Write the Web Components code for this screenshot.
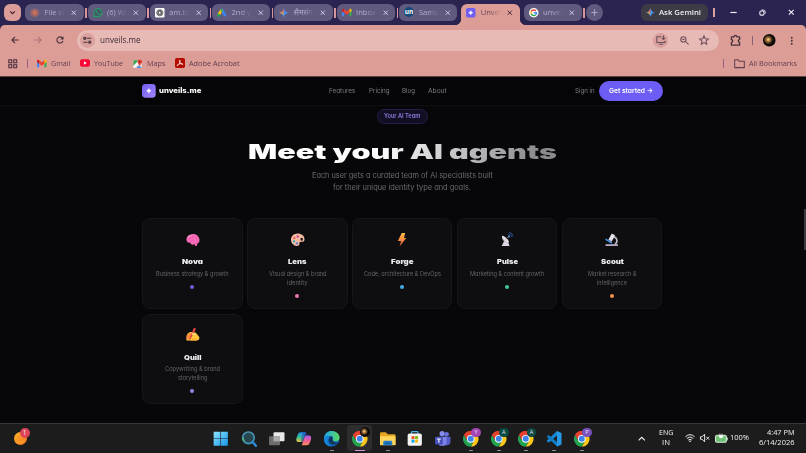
<!DOCTYPE html>
<html lang="en">
<head>
<meta charset="utf-8">
<title>Unveils</title>
<style>
  html, body { margin: 0; height: 100%; overflow: hidden; background: #070709; }
</style>
</head>
<body>
<desktop-screen></desktop-screen>

<script>
// ---------- icons ----------
const CHROME = `
  <path d="M12 12 1.6 6A12 12 0 0 1 22.4 6H12z" fill="#e5412f"/>
  <path d="M12 12 22.4 6A12 12 0 0 1 12 24l5.2-9z" fill="#fcc61d"/>
  <path d="M12 12 17.2 15 12 24A12 12 0 0 1 1.6 6l5.2 9z" fill="#23a350"/>
  <path d="M12 6h10.400A12 12 0 0 0 1.600 6l5.200 9z" fill="#e5412f"/>
  <circle cx="12" cy="12" r="6" fill="#fff"/><circle cx="12" cy="12" r="4.600" fill="#3c83ee"/>`;

const SPARK = `
  <defs><linearGradient id="s" x1="0" y1="0" x2="1" y2="1"><stop offset="0" stop-color="#ea4f47"/><stop offset=".35" stop-color="#58a45c"/><stop offset=".6" stop-color="#3f8df6"/><stop offset="1" stop-color="#4a86f5"/></linearGradient></defs>
  <path d="M12 0C14 7.500 16.500 10 24 12 16.500 14 14 16.500 12 24 10 16.500 7.500 14 0 12 7.500 10 10 7.500 12 0z" fill="#478ff3"/>
  <path d="M0 12C7.500 10 10 7.500 12 0L12 12z" fill="#e96a4a"/>
  <path d="M0 12C7.500 14 9 15 10.500 18.500L12 12z" fill="#e3b23c"/>`;

const MAIL = `
  <path d="M0 5v16h5.500V11z" fill="#4285f4"/><path d="M24 5v16h-5.500V11z" fill="#34a853"/>
  <path d="M0 5c0-3 3-4 5.500-2v9L0 8z" fill="#c5221f"/><path d="M24 5c0-3-3-4-5.500-2v9L24 8z" fill="#fbbc04"/>
  <path d="M5.500 3 12 8l6.500-5v9L12 17l-6.500-5z" fill="#ea4335"/>`;

const ICONS = {
  chrome: CHROME,
  spark: SPARK,
  mail: MAIL,
  down: `<path d="M4 8l8 8 8-8" fill="none" stroke="currentColor" stroke-width="4"/>`,
  up: `<path d="M2 17.500l10-10 10 10" fill="none" stroke="currentColor" stroke-width="3.600"/>`,
  close: `<path d="M3 3l18 18M21 3L3 21" fill="none" stroke="currentColor" stroke-width="4"/>`,
  plus: `<path d="M12 1v22M1 12h22" fill="none" stroke="currentColor" stroke-width="3.600"/>`,
  minus: `<path d="M1 12h22" stroke="currentColor" stroke-width="4"/>`,
  restore: `<rect x="3" y="7" width="14" height="14" rx="4" fill="none" stroke="currentColor" stroke-width="3.600"/><path d="M8 3.500h7q6 0 6 6V16" fill="none" stroke="currentColor" stroke-width="3.200"/>`,
  back: `<path d="M23 12H3M12 2.500 2.500 12l9.500 9.500" fill="none" stroke="currentColor" stroke-width="3.400"/>`,
  forward: `<path d="M1 12h20M12 2.500l9.500 9.500-9.500 9.500" fill="none" stroke="currentColor" stroke-width="3.200"/>`,
  reload: `<path d="M21 14.500A9.300 9.300 0 1 1 19 5.500l2 2.500" fill="none" stroke="currentColor" stroke-width="3.400"/><path d="M22.500 1v9.500H13z" fill="currentColor"/>`,
  tune: `<g fill="none" stroke="currentColor" stroke-width="3.200"><circle cx="5" cy="6.500" r="3"/><path d="M11 6.500h12M1 17.500h12"/><circle cx="19" cy="17.500" r="3"/></g>`,
  install: `<path d="M13 4H2v14h20v-4M7 22h10M18 1v9M14 7l4 4 4-4" fill="none" stroke="currentColor" stroke-width="2.600"/>`,
  zoomout: `<circle cx="9" cy="9" r="7" fill="none" stroke="currentColor" stroke-width="2.800"/><path d="M14 14l9 9M6 9h6" stroke="currentColor" stroke-width="2.800"/>`,
  star: `<path d="M12 2l3 7 7.500.600-5.700 5 1.700 7.400L12 18l-6.500 4 1.700-7.400-5.700-5L9 9z" fill="none" stroke="currentColor" stroke-width="2.500"/>`,
  puzzle: `<path d="M3 4h6q0-3 3-3t3 3h6v6q-3 0-3 3t3 3v6H3v-6q3 0 3-3t-3-3z" fill="none" stroke="currentColor" stroke-width="2.800" stroke-linejoin="round"/>`,
  dots: `<g fill="currentColor"><circle cx="12" cy="2.500" r="3"/><circle cx="12" cy="12" r="3"/><circle cx="12" cy="21.500" r="3"/></g>`,
  avatar: `<defs><radialGradient id="a" cx=".42" cy=".45" r=".38"><stop offset="0" stop-color="#fff1bd"/><stop offset=".3" stop-color="#c38a45"/><stop offset="1" stop-color="#0b0806"/></radialGradient></defs><circle cx="12" cy="12" r="12" fill="url(#a)"/>`,
  grid: `<g fill="none" stroke="currentColor" stroke-width="2.800"><rect x="2" y="2" width="7.500" height="7.500"/><rect x="14.500" y="2" width="7.500" height="7.500"/><rect x="2" y="14.500" width="7.500" height="7.500"/><rect x="14.500" y="14.500" width="7.500" height="7.500"/></g>`,
  folder: `<path d="M1.500 4h7.500l2.500 3h11v14h-21z" fill="none" stroke="currentColor" stroke-width="2.200" stroke-linejoin="round"/>`,
  youtube: `<rect x="0" y="3" width="24" height="18" rx="5" fill="#fa0535"/><path d="M9.500 8v8l7-4z" fill="#fff"/>`,
  maps: `<rect x="1" y="3" width="21" height="20" rx="3" fill="#f0eee9"/><path d="M1 6q0-3 3-3h10L1 17z" fill="#35a554"/><path d="M4 23 15 12l7 8q0 3-3 3z" fill="#c8d0d8"/><path d="M1 19 12 8l3 3L4 23q-3 0-3-4z" fill="#fff"/><path d="M9 23l6-6 7 6z" fill="#4285f4"/><path d="M17 1a6 6 0 0 0-6 6c0 4 4 5 6 11 2-6 6-7 6-11a6 6 0 0 0-6-6z" fill="#e8453a"/><circle cx="17" cy="7" r="2.200" fill="#8c1d18"/>`,
  acrobat: `<rect width="24" height="24" rx="4" fill="#b30b00"/><path d="M11.500 5c2 0 1 5-1 8.500S6 19 5 18s3-3.500 7-4.300 7.500-.200 7 1.300-4.500 0-6.500-3-3-7-1-7z" fill="none" stroke="#fff" stroke-width="1.700"/>`,
  claude: `<path d="M12 1v22M1 12h22M4 4l16 16M20 4 4 20M8 2l8 20M16 2 8 22M2 8l20 8M22 8 2 16" stroke="#dc7452" stroke-width="1.700"/>`,
  whatsapp: `<path d="M2 22l1.500-5.500A10 10 0 1 1 7.500 20.500z" fill="#435568" stroke="#229f62" stroke-width="2.800"/><path d="M8.500 6.500q-2 2 0 5 3 5 7 6 3-1 2-3l-3-1.200-1.300 1.200q-2.500-1-3.400-3.500l1-1.500-1-3z" fill="#2aae68"/>`,
  chatgpt: `<rect width="24" height="24" rx="3" fill="#fff"/><g fill="none" stroke="#3c3c3c" stroke-width="1.500"><circle cx="12" cy="12" r="8"/><ellipse cx="12" cy="12" rx="7" ry="3.500"/><ellipse cx="12" cy="12" rx="7" ry="3.500" transform="rotate(60 12 12)"/><ellipse cx="12" cy="12" rx="7" ry="3.500" transform="rotate(120 12 12)"/></g>`,
  ads: `<path d="M12.500 5 20 18" stroke="#3d84f3" stroke-width="7" stroke-linecap="round"/><path d="M11 6 5 16" stroke="#fbc012" stroke-width="7" stroke-linecap="round"/><circle cx="4.500" cy="18.500" r="4" fill="#24a65a"/><path d="M8.500 4.500q3-4.500 7 0l-3.500 7z" fill="#28a755"/>`,
  google: `<circle cx="12" cy="12" r="12" fill="#fff"/><g fill="none" stroke-width="3.600"><path d="M17.500 7.500A7.200 7.200 0 0 0 5.600 9" stroke="#ea4335"/><path d="M5.600 9a7.200 7.200 0 0 0 0 6" stroke="#fbbc04"/><path d="M5.600 15A7.200 7.200 0 0 0 17 17" stroke="#34a853"/><path d="M17 17a7 7 0 0 0 2-5h-7" stroke="#4285f4"/></g>`,
  brand: `<defs><linearGradient id="b" x1="0" y1="0" x2="1" y2="1"><stop offset="0" stop-color="#6e5ff4"/><stop offset="1" stop-color="#a583fa"/></linearGradient></defs><rect width="24" height="24" rx="6" fill="url(#b)"/><path d="M12 8q.800 3.200 4 4-3.200.800-4 4-.800-3.200-4-4 3.200-.800 4-4z" fill="#fff" stroke="#fff" stroke-width=".8"/>`,
  favicon: `<rect width="24" height="24" rx="5" fill="#6f5cf1"/><path d="M12 6.500q1 4.500 5.500 5.500-4.500 1-5.500 5.500-1-4.500-5.500-5.500 4.500-1 5.500-5.500z" fill="#fff" stroke="#fff"/>`,

  // agents
  brain: `<path d="M1 13C0 8 4 3 9 2.500 14 .500 23 3 24 12c.300 3-1 6-4 7l-1 4h-2.500l-1-3C11 22 8 20 7 17 4 18 1.500 16 1 13z" fill="#f66bb5"/><path d="M8 17c0-3 2-4 5-4M16 19c3 1 5-1 5-4M4 11c2-2 4-2 6-1M12 4c-2 2-1 4 1 5M19 6c-2 1-2 3 0 5" fill="none" stroke="#e555ad" stroke-width="1.200"/><path d="M3 8q2-4 7-4" fill="none" stroke="#fb9fd2" stroke-width="1.800"/>`,
  palette: `<path d="M12 1C5 1 0 6 0 12s5 11 10 11c3 0 5-1 5-3s-1-3 1-4c3-1 8 1 8-5C24 5 18 1 12 1z" fill="#f5b9a0"/><path d="M17 9.500q4-2.500 4 1.500t-4 2z" fill="#0e0e10"/><circle cx="12" cy="6" r="2.200" fill="#c54796"/><circle cx="6" cy="9" r="2" fill="#ee5148"/><circle cx="5.500" cy="15" r="2" fill="#24a7bd"/><circle cx="10.500" cy="18.500" r="2" fill="#5679d5"/>`,
  bolt: `<defs><linearGradient id="z" x1="0" y1="0" x2="0" y2="1"><stop offset="0" stop-color="#ffbd46"/><stop offset="1" stop-color="#ef5942"/></linearGradient></defs><path d="M12 0h6l-2 9h4L8 24l3-10H5z" fill="url(#z)"/>`,
  dish: `<path d="M8 13 3 23h14l-3-8z" fill="#ddd4e4"/><path d="M4 5C2 11 7 18 16 17z" fill="#b9adbd"/><path d="M4 5c3-1 12 7 12 12C12 18 3 11 4 5z" fill="#e6dfe9"/><path d="M10 11l6-5" stroke="#8e7e92" stroke-width="1.500"/><circle cx="16" cy="6" r="1.800" fill="#418fd4"/><path d="M15 2q5-.500 6 5M16-1q6 0 7 7" fill="none" stroke="#2c529c" stroke-width="1.600"/>`,
  scope: `<path d="M14 7c7 0 10 8 4 13" fill="none" stroke="#b9b3c4" stroke-width="3"/><path d="M12 1l6 3-6 11-6-3z" fill="#e5e1eb"/><path d="M8 12l4 2-1 3-4-2z" fill="#a69dad"/><path d="M1 11l11 7" stroke="#3e93e2" stroke-width="2.800"/><path d="M1 20h22v3H1z" fill="#bfb8ce"/>`,
  writing: `<path d="M1 22V14c1-4 4-7 8-7l8 1 6 7c2 3 0 7-4 7z" fill="#ffc83d"/><path d="M1 22V14l6-6 4 4-5 5z" fill="#ff8c3a"/><path d="M4 22 14 0l4 1-9 17z" fill="#e04a45"/><path d="M10 8l8 3-1 2-6-1z" fill="#ffda70"/><path d="M8 22l3-4 4 1 3-2 2 5z" fill="#ffb02e"/>`,

  // taskbar
  windows: `<defs><linearGradient id="w" x1="0" y1="0" x2="1" y2="1"><stop offset="0" stop-color="#8ce5ff"/><stop offset="1" stop-color="#1694e8"/></linearGradient></defs><path d="M1 1h10.500v10.500H1zM12.500 1H23v10.500H12.500zM1 12.500h10.500V23H1zM12.500 12.500H23V23H12.500z" fill="url(#w)"/>`,
  search: `<circle cx="11.500" cy="10.500" r="9" fill="#28464e" stroke="#4595b5" stroke-width="2.500"/><path d="M5 16a9 9 0 0 1-2-6" fill="none" stroke="#4eb480" stroke-width="2.500"/><path d="M18 17l5 6" stroke="#2f8de0" stroke-width="3.600" stroke-linecap="round"/>`,
  taskview: `<rect x="7" y="2" width="17" height="14" rx="1.500" fill="#e9e9e9"/><rect x="0" y="8" width="17" height="14" rx="1.500" fill="#757575" opacity=".9"/><path d="M7 8h10v8H7z" fill="#aaa"/>`,
  copilot: `<defs><linearGradient id="c" x1="0" y1="0" x2="0" y2="1"><stop offset="0" stop-color="#1d8cf0"/><stop offset=".5" stop-color="#35bf93"/><stop offset="1" stop-color="#f0c541"/></linearGradient><linearGradient id="d" x1="0" y1="0" x2="0" y2="1"><stop offset="0" stop-color="#a45df2"/><stop offset=".5" stop-color="#ef5a9c"/><stop offset="1" stop-color="#fb8855"/></linearGradient></defs><path d="M7 2h8l-5 15H4c-4 0-4-4-3-7l2-5q1-3 4-3z" fill="url(#c)"/><path d="M17 22H9l5-15h6c4 0 4 4 3 7l-2 5q-1 3-4 3z" fill="url(#d)"/><path d="M10 2h4q3 0 3 5h-3l-4 10H7z" fill="#1f55ba" opacity=".6"/>`,
  edge: `<defs><linearGradient id="e"><stop offset="0" stop-color="#1ba8ee"/><stop offset="1" stop-color="#5fd85d"/></linearGradient></defs><circle cx="12" cy="12" r="12" fill="#1265b8"/><path d="M0 11C1 4 6 0 12 0c7 0 12 5 12 10 0 4-3 6-7 6-3 0-4-1-3-3 1-3-1-5-4-5-5 0-9 4-8 10z" fill="url(#e)"/><path d="M10 8c-5 4-3 13 6 13 3 0 5-1 7-3-3 1-8 0-10-4-1-2 1-3 0-5z" fill="#12365b"/><path d="M10 8c-5 3-5 11 1 16C4 24-1 18 0 11 3 7 7 6 10 8z" fill="#1683d7"/>`,
  files: `<path d="M0 4q0-2 2-2h7l3 3h10q2 0 2 2v14H0z" fill="#e7a324"/><path d="M0 8h24v14H0z" fill="#ffd45a"/><path d="M5 22v-5q0-2 2-2h10q2 0 2 2v5z" fill="#2580c9"/><path d="M8 18h8v2H8z" fill="#165b94"/>`,
  store: `<path d="M7 5V2q0-1 1-1h8q1 0 1 1v3" fill="none" stroke="#48b4eb" stroke-width="1.800"/><rect x="1" y="4" width="22" height="19" rx="3" fill="#f3f3f3"/><path d="M7 8h4.500v4.500H7z" fill="#f25022"/><path d="M12.500 8H17v4.500h-4.500z" fill="#7fba00"/><path d="M7 13.500h4.500V18H7z" fill="#00a4ef"/><path d="M12.500 13.500H17V18h-4.500z" fill="#ffb900"/>`,
  teams: `<circle cx="18" cy="5" r="3.500" fill="#6a70dc"/><circle cx="11" cy="4" r="4" fill="#858cf0"/><path d="M14 9h10v8q-1 5-6 5h-4z" fill="#555cc8"/><path d="M5 9h13v9q-1 5-7 5t-6-5z" fill="#7b83eb"/><rect x="0" y="9" width="12" height="12" rx="2" fill="#484eb9"/><path d="M3 12.500h6M6 12.500V18" stroke="#fff" stroke-width="1.700"/>`,
  vscode: `<path d="M17 0l7 3v18l-7 3z" fill="#2699e8"/><path d="M17 0v7L4 18l-3-3z" fill="#1689d6"/><path d="M17 24v-7L4 6 1 9z" fill="#1279c4"/>`,
  widget: `<defs><linearGradient id="o" x1="0" y1="0" x2="1" y2="1"><stop offset="0" stop-color="#ffbb2e"/><stop offset="1" stop-color="#f06716"/></linearGradient></defs><circle cx="12" cy="12" r="12" fill="url(#o)"/><path d="M1 15q11 6 21-3A12 12 0 0 1 3 20z" fill="#ff9b2c"/>`,
  wifi: `<g fill="none" stroke="currentColor" stroke-width="2.300"><path d="M1 9q11-10 22 0M4.500 13q7.500-7 15 0M8 17q4-4 8 0"/></g><circle cx="12" cy="20" r="2" fill="currentColor"/>`,
  mute: `<path d="M1 9h4l6-6v18l-6-6H1z" fill="none" stroke="currentColor" stroke-width="2.200"/><path d="M15 9l7 7M22 9l-7 7" stroke="currentColor" stroke-width="2.200"/>`,
  battery: `<rect x="1" y="6" width="20" height="13" rx="3" fill="#6dbf72" stroke="#d8ead8" stroke-width="2"/><path d="M22.500 10v5" stroke="#d8ead8" stroke-width="2"/><path d="M9 3v4M13 3v4M7.500 7h7v2q-3.500 4-7 0z" fill="#fff" stroke="#fff" stroke-width="1.200"/>`
};

class UiIcon extends HTMLElement {
  constructor() {
    super();
    this.attachShadow({ mode: "open" });
  }
  connectedCallback() {
    const size = this.getAttribute("size") || 10;
    this.shadowRoot.innerHTML = `
      <style>
        :host { display: block; flex: none; width: ${size}px; height: ${size}px; }
        svg { display: block; width: 100%; height: 100%; overflow: visible; }
      </style>
      <svg viewBox="0 0 24 24">${ICONS[this.getAttribute("name")] || ""}</svg>`;
  }
}
customElements.define("ui-icon", UiIcon);

// one line of text, stretched or squeezed to the width in its "w" attribute
class FitText extends HTMLElement {
  constructor() {
    super();
    this.attachShadow({ mode: "open" });
    this.shadowRoot.innerHTML = `
      <style>
        :host { display: block; flex: none; white-space: nowrap; }
        span { display: inline-block; transform-origin: 0 50%; }
        :host([gradient]) span { background: var(--text-fill); -webkit-background-clip: text; background-clip: text; color: transparent; }
      </style>
      <span><slot></slot></span>`;
  }
  connectedCallback() {
    const w = Number(this.getAttribute("w"));
    const span = this.shadowRoot.querySelector("span");
    this.style.width = w + "px";
    const natural = span.getBoundingClientRect().width;
    if (natural) span.style.transform = `scaleX(${w / natural})`;
  }
}
customElements.define("fit-text", FitText);

// ---------- browser ----------
class BrowserTab extends HTMLElement {
  constructor() {
    super();
    this.attachShadow({ mode: "open" });
  }
  connectedCallback() {
    const icon = this.getAttribute("icon");
    this.shadowRoot.innerHTML = `
      <style>
        :host {
          position: relative; display: flex; align-items: center; box-sizing: border-box;
          flex: none; width: 58.300px; height: 17.500px; padding: 0 7px 0 5px;
          border-radius: 6px; background: #605a7e; color: #b3adcb;
          font-size: 7.600px; line-height: 12px;
        }
        :host([sep])::after {
          content: ""; position: absolute; right: -3px; top: 4px; width: 1.500px; height: 10px; background: #d8979a;
        }
        :host([active]) {
          height: 21px; margin-bottom: -3.500px; padding-bottom: 3.500px;
          border-radius: 6px 6px 0 0; background: #dd9d97; color: #6b4858;
        }
        :host([active])::before, .foot {
          content: ""; position: absolute; bottom: 0; left: -5px; width: 5px; height: 5px;
          background: radial-gradient(circle at 0 0, transparent 4.600px, #dd9d97 5px);
        }
        .foot { display: none; left: auto; right: -5px; transform: scaleX(-1); }
        :host([active]) .foot { display: block; }
        .title {
          flex: 1; margin: 0 3px 0 4.800px; overflow: hidden; white-space: nowrap;
          -webkit-mask-image: linear-gradient(90deg, #000 40%, transparent 88%);
        }
        .close { color: #d5cfe6; }
        :host([active]) .close { color: #382036; }
        .un { width: 10px; height: 10px; border-radius: 50%; background: #154a7d; color: #fff; font: bold 6.500px/9px "Open Sans", sans-serif; text-align: center; }
      </style>
      ${icon === "un" ? `<div class="un">un</div>` : `<ui-icon name="${icon}" size="9.500"></ui-icon>`}
      <div class="title"><slot></slot></div>
      <ui-icon class="close" name="close" size="5.500"></ui-icon>
      <i class="foot"></i>`;
  }
}
customElements.define("browser-tab", BrowserTab);

class TabStrip extends HTMLElement {
  constructor() {
    super();
    this.attachShadow({ mode: "open" });
    this.shadowRoot.innerHTML = `
      <style>
        :host { display: flex; align-items: center; height: 24.500px; background: #2b2350; }
        .menu { display: grid; place-items: center; width: 17.500px; height: 17.500px; margin: 0 4px 0 3.800px; border-radius: 6px; background: #dc9c97; color: #3c2433; }
        .tabs { display: flex; gap: 4px; }
        .add { display: grid; place-items: center; width: 17px; height: 17px; margin-left: 4px; border-radius: 50%; background: #605a7e; color: #aaa5c0; }
        .gemini { display: flex; align-items: center; gap: 4px; box-sizing: border-box; width: 67.500px; height: 17px; margin-left: auto; padding-left: 5px; border-radius: 6px; background: #3d3b45; color: #ededf2; font-size: 7.800px; font-weight: 600; line-height: 12px; }
        .sep { width: 1.500px; height: 9px; margin-left: 5px; background: #dba0a0; }
        .win { display: flex; align-items: center; gap: 22px; margin: 0 11.500px 0 15.500px; color: #f2eff8; }
      </style>
      <div class="menu"><ui-icon name="down" size="7"></ui-icon></div>
      <div class="tabs">
        <browser-tab icon="claude" sep>File cre</browser-tab>
        <browser-tab icon="whatsapp" sep>(6) Wha</browser-tab>
        <browser-tab icon="chatgpt" sep>am.to</browser-tab>
        <browser-tab icon="ads" sep>2nd ye</browser-tab>
        <browser-tab icon="spark" sep>सैमसंग</browser-tab>
        <browser-tab icon="mail" sep>Inbox</browser-tab>
        <browser-tab icon="un">Sams</browser-tab>
        <browser-tab icon="favicon" active>Unveil</browser-tab>
        <browser-tab icon="google" sep>unveil</browser-tab>
      </div>
      <div class="add"><ui-icon name="plus" size="7"></ui-icon></div>
      <div class="gemini"><ui-icon name="spark" size="9"></ui-icon><fit-text w="42">Ask Gemini</fit-text></div>
      <div class="sep"></div>
      <div class="win">
        <ui-icon name="minus" size="7"></ui-icon>
        <ui-icon name="restore" size="7"></ui-icon>
        <ui-icon name="close" size="6.500"></ui-icon>
      </div>`;
  }
}
customElements.define("tab-strip", TabStrip);

class AddressBar extends HTMLElement {
  constructor() {
    super();
    this.attachShadow({ mode: "open" });
    this.shadowRoot.innerHTML = `
      <style>
        :host { display: flex; align-items: center; box-sizing: border-box; height: 27px; padding: 4.500px 11px 0 11px; border-radius: 5px 5px 0 0; background: #dd9d97; color: #46303b; }
        .nav { display: flex; gap: 14.500px; width: 66px; }
        .fwd { color: #a87479; }
        .box { display: flex; align-items: center; box-sizing: border-box; width: 642px; height: 21.500px; padding: 0 10px 0 3px; border-radius: 11px; background: #e8bab6; }
        .round { display: grid; place-items: center; width: 14.600px; height: 14.600px; border-radius: 50%; background: #d9a09e; }
        .url { margin-left: 5.500px; color: #3d2c36; font-size: 9px; line-height: 14px; }
        .tools { display: flex; align-items: center; gap: 10.500px; margin-left: auto; color: #6d4d59; }
        .tools .round { margin-right: 1px; }
        .sep { width: 1.300px; height: 9.500px; margin: 0 10.500px 0 10.500px; background: #8b6275; }
      </style>
      <div class="nav">
        <ui-icon name="back" size="8"></ui-icon>
        <ui-icon class="fwd" name="forward" size="8"></ui-icon>
        <ui-icon name="reload" size="8"></ui-icon>
      </div>
      <div class="box">
        <div class="round"><ui-icon name="tune" size="8.500"></ui-icon></div>
        <div class="url"><fit-text w="40.500">unveils.me</fit-text></div>
        <div class="tools">
          <div class="round"><ui-icon name="install" size="10"></ui-icon></div>
          <ui-icon name="zoomout" size="9"></ui-icon>
          <ui-icon name="star" size="10"></ui-icon>
        </div>
      </div>
      <ui-icon name="puzzle" size="11" style="margin-left: 11px"></ui-icon>
      <div class="sep"></div>
      <ui-icon name="avatar" size="12.500"></ui-icon>
      <ui-icon name="dots" size="7.500" style="margin-left: auto"></ui-icon>`;
  }
}
customElements.define("address-bar", AddressBar);

class BookmarksBar extends HTMLElement {
  constructor() {
    super();
    this.attachShadow({ mode: "open" });
    this.shadowRoot.innerHTML = `
      <style>
        :host { display: flex; align-items: center; box-sizing: border-box; height: 25.500px; padding: 0 9px 1px 8px; border-bottom: 1px solid #5e4140; background: #dd9d97; color: #613e4e; font-size: 7.900px; line-height: 12px; }
        .sep { width: 1.400px; height: 9.500px; background: #926579; }
        .mark { display: flex; align-items: center; gap: 4px; margin-right: 10px; }
        .all { display: flex; align-items: center; gap: 4px; margin-left: 10px; }
      </style>
      <ui-icon name="grid" size="9.500" style="color: #503541"></ui-icon>
      <div class="sep" style="margin: 0 9.500px 0 9px"></div>
      <div class="mark"><ui-icon name="mail" size="9.500"></ui-icon><fit-text w="19.500">Gmail</fit-text></div>
      <div class="mark"><ui-icon name="youtube" size="10"></ui-icon><fit-text w="29">YouTube</fit-text></div>
      <div class="mark"><ui-icon name="maps" size="9.500"></ui-icon><fit-text w="18.500">Maps</fit-text></div>
      <div class="mark"><ui-icon name="acrobat" size="10"></ui-icon><fit-text w="50.500">Adobe Acrobat</fit-text></div>
      <div class="sep" style="margin-left: auto"></div>
      <div class="all"><ui-icon name="folder" size="11"></ui-icon><fit-text w="48">All Bookmarks</fit-text></div>`;
  }
}
customElements.define("bookmarks-bar", BookmarksBar);

// ---------- site ----------
class SiteNav extends HTMLElement {
  constructor() {
    super();
    this.attachShadow({ mode: "open" });
    this.shadowRoot.innerHTML = `
      <style>
        :host { display: flex; align-items: center; box-sizing: border-box; height: 28.500px; padding: 0 143px 0 141.500px; border-bottom: 1px solid #101013; background: #050507; color: #7d7d81; font-size: 6.800px; line-height: 12px; }
        .name { margin-left: 4.200px; color: #fff; font-weight: 800; font-size: 7px; }
        .links { display: flex; gap: 12.800px; margin-left: 127.800px; }
        .sign { margin-left: auto; }
        .cta { display: grid; place-items: center; width: 64.300px; height: 20px; margin-left: 4.500px; border-radius: 10px; background: #6d5df4; color: #fff; font-weight: 600; }
      </style>
      <ui-icon name="brand" size="13.700"></ui-icon>
      <fit-text class="name" w="42.300">unveils.me</fit-text>
      <div class="links">
        <fit-text w="26.300">Features</fit-text>
        <fit-text w="20.600">Pricing</fit-text>
        <fit-text w="13">Blog</fit-text>
        <fit-text w="18.700">About</fit-text>
      </div>
      <fit-text class="sign" w="19.700">Sign in</fit-text>
      <div class="cta"><fit-text w="44">Get started →</fit-text></div>`;
  }
}
customElements.define("site-nav", SiteNav);

class AgentCard extends HTMLElement {
  constructor() {
    super();
    this.attachShadow({ mode: "open" });
  }
  connectedCallback() {
    this.shadowRoot.innerHTML = `
      <style>
        :host { display: flex; flex-direction: column; align-items: center; box-sizing: border-box; height: 90.500px; padding-top: 13.500px; border: 1px solid #161619; border-radius: 8px; background: #0e0e10; }
        .name { margin: 10.800px 0 .700px; color: #f0f0f2; font-size: 6.700px; font-weight: 900; line-height: 11px; }
        .desc { color: #656569; font-size: 5.900px; line-height: 9px; }
        ::slotted(fit-text) { margin: 0 auto; }
        .dot { width: 4px; height: 4px; margin-top: 6.700px; border-radius: 50%; background: ${this.getAttribute("dot")}; }
      </style>
      <ui-icon name="${this.getAttribute("icon")}" size="13.500"></ui-icon>
      <fit-text class="name" w="${this.getAttribute("name-w")}">${this.getAttribute("name")}</fit-text>
      <div class="desc"><slot></slot></div>
      <div class="dot"></div>`;
  }
}
customElements.define("agent-card", AgentCard);

class AgentsSection extends HTMLElement {
  constructor() {
    super();
    this.attachShadow({ mode: "open" });
    this.shadowRoot.innerHTML = `
      <style>
        :host { display: flex; flex-direction: column; align-items: center; flex: 1; min-height: 0; padding-top: 3.500px; background: #070709; }
        .pill { display: grid; place-items: center; box-sizing: border-box; width: 51px; height: 14.500px; margin-left: -2px; border: 1px solid #251e49; border-radius: 8px; background: #120f25; color: #8b7dde; font-size: 5.900px; font-weight: 600; line-height: 10px; }
        h2 { --text-fill: linear-gradient(105deg, #fff 42%, #8b8b8e 92%); margin: 15px 0 0 -1.500px; font-size: 19.500px; font-weight: 900; line-height: 26px; }
        .lead { display: flex; flex-direction: column; align-items: center; margin: 5.300px 0 0 -2px; color: #6b6b70; font-size: 7.700px; line-height: 12.300px; }
        .cards { display: grid; grid-template-columns: repeat(5, 100.300px); gap: 5px 4.600px; margin: 24px 0 0 -1.500px; }
      </style>
      <div class="pill"><fit-text w="36.300">Your AI Team</fit-text></div>
      <h2><fit-text gradient w="309">Meet your AI agents</fit-text></h2>
      <div class="lead">
        <fit-text w="181">Each user gets a curated team of AI specialists built</fit-text>
        <fit-text w="138">for their unique identity type and goals.</fit-text>
      </div>
      <div class="cards">
        <agent-card icon="brain" name="Nova" name-w="21" dot="#6d60dc"><fit-text w="72.500">Business strategy &amp; growth</fit-text></agent-card>
        <agent-card icon="palette" name="Lens" name-w="18.500" dot="#e477ad"><fit-text w="57.500">Visual design &amp; brand</fit-text><fit-text w="20.500">identity</fit-text></agent-card>
        <agent-card icon="bolt" name="Forge" name-w="22.500" dot="#42ace3"><fit-text w="77">Code, architecture &amp; DevOps</fit-text></agent-card>
        <agent-card icon="dish" name="Pulse" name-w="21" dot="#40c795"><fit-text w="74">Marketing &amp; content growth</fit-text></agent-card>
        <agent-card icon="scope" name="Scout" name-w="23" dot="#ed9448"><fit-text w="48.500">Market research &amp;</fit-text><fit-text w="30">intelligence</fit-text></agent-card>
        <agent-card icon="writing" name="Quill" name-w="17.500" dot="#9583e8"><fit-text w="55">Copywriting &amp; brand</fit-text><fit-text w="29.500">storytelling</fit-text></agent-card>
      </div>`;
  }
}
customElements.define("agents-section", AgentsSection);

// ---------- taskbar ----------
class TaskItem extends HTMLElement {
  constructor() {
    super();
    this.attachShadow({ mode: "open" });
  }
  connectedCallback() {
    const badge = this.getAttribute("badge");
    const color = this.getAttribute("color");
    this.shadowRoot.innerHTML = `
      <style>
        :host { position: relative; display: grid; place-items: center; width: 27.750px; height: 26px; }
        :host([active])::before { content: ""; position: absolute; inset: 0 1.500px; border-radius: 3px; background: #2d2c2e; }
        ui-icon { position: relative; }
        .badge { position: absolute; left: 14.500px; top: 2.500px; width: 9.500px; height: 9.500px; border-radius: 50%; background: ${color}; color: #e9e5ee; font-size: 5.500px; line-height: 9.500px; text-align: center; }
        .face { position: absolute; left: 14.500px; top: 2px; }
        :host([running])::after { content: ""; position: absolute; left: 12px; bottom: 0; width: 4px; height: 1.700px; border-radius: 1px; background: #929292; }
        :host([active])::after { left: 9px; width: 10px; background: #d19adb; }
      </style>
      <ui-icon name="${this.getAttribute("icon")}" size="15.500"></ui-icon>
      ${badge ? `<span class="badge">${badge}</span>` : ""}
      ${this.hasAttribute("active") ? `<ui-icon class="face" name="avatar" size="10"></ui-icon>` : ""}`;
  }
}
customElements.define("task-item", TaskItem);

class TaskBar extends HTMLElement {
  constructor() {
    super();
    this.attachShadow({ mode: "open" });
    this.shadowRoot.innerHTML = `
      <style>
        :host { display: flex; align-items: center; box-sizing: border-box; height: 30.500px; border-top: 1px solid #373737; background: #1c1c1c; color: #f2f2f2; font-size: 7.400px; line-height: 9.800px; }
        .widget { position: relative; width: 207px; padding-left: 13.500px; box-sizing: border-box; }
        .count { position: absolute; left: 19.500px; top: -4px; width: 10px; height: 10px; border-radius: 50%; background: #dc4458; color: #fff; font-size: 6.500px; line-height: 10px; text-align: center; }
        .apps { display: flex; }
        .tray { display: flex; align-items: center; margin-left: auto; padding-right: 12px; }
        .lang, .clock { display: flex; flex-direction: column; }
        .lang { align-items: center; margin: 0 12px 0 13.500px; }
        .clock { align-items: flex-end; margin-left: 10px; }
      </style>
      <div class="widget"><ui-icon name="widget" size="13"></ui-icon><span class="count">1</span></div>
      <div class="apps">
        <task-item icon="windows"></task-item>
        <task-item icon="search"></task-item>
        <task-item icon="taskview"></task-item>
        <task-item icon="copilot"></task-item>
        <task-item icon="edge" running></task-item>
        <task-item icon="chrome" running active></task-item>
        <task-item icon="files" running></task-item>
        <task-item icon="store"></task-item>
        <task-item icon="teams"></task-item>
        <task-item icon="chrome" running badge="Y" color="#a644b5"></task-item>
        <task-item icon="chrome" running badge="A" color="#0b4a43"></task-item>
        <task-item icon="chrome" running badge="A" color="#0b4a43"></task-item>
        <task-item icon="vscode" running></task-item>
        <task-item icon="chrome" running badge="P" color="#7950bd"></task-item>
      </div>
      <div class="tray">
        <ui-icon name="up" size="7.500"></ui-icon>
        <div class="lang"><fit-text w="14.500">ENG</fit-text><fit-text w="8">IN</fit-text></div>
        <ui-icon name="wifi" size="10"></ui-icon>
        <ui-icon name="mute" size="10" style="margin-left: 5px"></ui-icon>
        <ui-icon name="battery" size="13" style="margin: 0 1.500px 0 5px"></ui-icon>
        <fit-text w="19">100%</fit-text>
        <div class="clock"><fit-text w="27.500">4:47 PM</fit-text><fit-text w="35.500">6/14/2026</fit-text></div>
      </div>`;
  }
}
customElements.define("task-bar", TaskBar);

class DesktopScreen extends HTMLElement {
  constructor() {
    super();
    this.attachShadow({ mode: "open" });
    this.shadowRoot.innerHTML = `
      <style>
        :host { position: relative; display: flex; flex-direction: column; width: 806px; height: 453px; overflow: hidden; background: #2b2350; font-family: "Open Sans", "Noto Sans", sans-serif; }
        .page { display: flex; flex-direction: column; flex: 1; min-height: 0; font-family: Inter, "Liberation Sans", sans-serif; font-feature-settings: "cv11"; }
        .scroll { position: absolute; right: 0; top: 209px; width: 2px; height: 41px; background: #3b3b3d; }
      </style>
      <tab-strip></tab-strip>
      <address-bar></address-bar>
      <bookmarks-bar></bookmarks-bar>
      <div class="page">
        <site-nav></site-nav>
        <agents-section></agents-section>
      </div>
      <task-bar></task-bar>
      <div class="scroll"></div>`;
  }
}
customElements.define("desktop-screen", DesktopScreen);
</script>
</body>
</html>
